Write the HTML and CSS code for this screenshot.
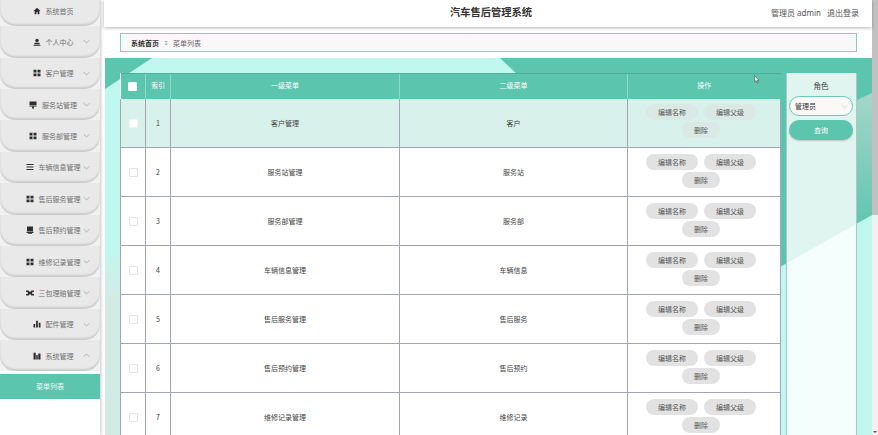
FILE: index.html
```html
<!DOCTYPE html>
<html lang="zh-CN">
<head>
<meta charset="utf-8">
<title>汽车售后管理系统</title>
<link rel="stylesheet" href="styles.css">
</head>
<body>
<svg class="defs" width="0" height="0" aria-hidden="true">
  <symbol id="i-home" viewBox="0 0 16 16"><path d="M8 1.500 1 8h2.200v6.500h3.600V10h2.400v4.500h3.600V8H15z"/></symbol>
  <symbol id="i-user" viewBox="0 0 16 16"><circle cx="8" cy="4.800" r="3.500"/><path d="M3.500 9.500h9l1 2V13h-11v-1.500zM1 14h14v1.500H1z"/></symbol>
  <symbol id="i-grid" viewBox="0 0 16 16"><path d="M1 1.500h6V7H1zM9 1.500h6V7H9zM1 9h6v5.500H1zM9 9h6v5.500H9z"/></symbol>
  <symbol id="i-station" viewBox="0 0 16 16"><path d="M1 1h14v7.500H1zM1 9.500h14V11H1zM6 11.500h4V15H6z"/></symbol>
  <symbol id="i-list" viewBox="0 0 16 16"><path d="M1 2h14v2H1zM1 7h14v2H1zM1 12h14v2H1z"/></symbol>
  <symbol id="i-screen" viewBox="0 0 16 16"><path d="M2 1h12v9.500H2zM1 11.500h14V14H1zM4 14.500h8V16H4z"/></symbol>
  <symbol id="i-cross" viewBox="0 0 16 16"><path d="M0 3h5l3 3 3-3h5v3h-3l-1 2 1 2h3v3h-5l-3-3-3 3H0v-3h3l1-2-1-2H0z"/></symbol>
  <symbol id="i-bars" viewBox="0 0 16 16"><path d="M1 8h3.500v7H1zM6.200 1.500h3.500V15H6.200zM11.500 5.500H15V15h-3.500z"/></symbol>
  <symbol id="i-stats" viewBox="0 0 16 16"><path d="M1 1.500h4.500V15H1zM6.500 6h3v9h-3zM10.500 3H15v12h-4.500z"/></symbol>
  <symbol id="i-down" viewBox="0 0 8 8"><path d="M.8 2.500 4 5.700l3.200-3.200"/></symbol>
  <symbol id="i-up" viewBox="0 0 8 8"><path d="M.8 5.500 4 2.300l3.200 3.200"/></symbol>
</svg>
<div class="app">
  <aside class="sidebar">
    <ul class="nav">
      <li class="nav-item"><span class="nav-main"><svg class="nav-icon"><use href="#i-home"/></svg>系统首页</span></li>
      <li class="nav-item"><span class="nav-main"><svg class="nav-icon"><use href="#i-user"/></svg>个人中心</span><svg class="nav-arrow"><use href="#i-down"/></svg></li>
      <li class="nav-item"><span class="nav-main"><svg class="nav-icon"><use href="#i-grid"/></svg>客户管理</span><svg class="nav-arrow"><use href="#i-down"/></svg></li>
      <li class="nav-item"><span class="nav-main"><svg class="nav-icon"><use href="#i-station"/></svg>服务站管理</span><svg class="nav-arrow"><use href="#i-down"/></svg></li>
      <li class="nav-item"><span class="nav-main"><svg class="nav-icon"><use href="#i-grid"/></svg>服务部管理</span><svg class="nav-arrow"><use href="#i-down"/></svg></li>
      <li class="nav-item"><span class="nav-main"><svg class="nav-icon"><use href="#i-list"/></svg>车辆信息管理</span><svg class="nav-arrow"><use href="#i-down"/></svg></li>
      <li class="nav-item"><span class="nav-main"><svg class="nav-icon"><use href="#i-grid"/></svg>售后服务管理</span><svg class="nav-arrow"><use href="#i-down"/></svg></li>
      <li class="nav-item"><span class="nav-main"><svg class="nav-icon"><use href="#i-screen"/></svg>售后预约管理</span><svg class="nav-arrow"><use href="#i-down"/></svg></li>
      <li class="nav-item"><span class="nav-main"><svg class="nav-icon"><use href="#i-grid"/></svg>维修记录管理</span><svg class="nav-arrow"><use href="#i-down"/></svg></li>
      <li class="nav-item"><span class="nav-main"><svg class="nav-icon"><use href="#i-cross"/></svg>三包理赔管理</span><svg class="nav-arrow"><use href="#i-down"/></svg></li>
      <li class="nav-item"><span class="nav-main"><svg class="nav-icon"><use href="#i-bars"/></svg>配件管理</span><svg class="nav-arrow"><use href="#i-down"/></svg></li>
      <li class="nav-item"><span class="nav-main"><svg class="nav-icon"><use href="#i-stats"/></svg>系统管理</span><svg class="nav-arrow"><use href="#i-up"/></svg></li>
    </ul>
    <div class="nav-active">菜单列表</div>
  </aside>
  <main class="main">
    <header class="topbar">
      <h1 class="title">汽车售后管理系统</h1>
      <div class="account"><span>管理员 admin</span><span>退出登录</span></div>
    </header>
    <nav class="crumbs"><strong>系统首页</strong><span class="crumb-sep">Ξ</span><span>菜单列表</span></nav>
    <section class="panel">
      <div class="panel-tint"></div>
      <div class="panel-body">
        <table class="grid">
          <thead>
            <tr><th class="col-check"><span class="check check-head"></span></th><th class="col-index">索引</th><th class="col-name">一级菜单</th><th class="col-name2">二级菜单</th><th class="col-ops">操作</th></tr>
          </thead>
          <tbody>
            <tr class="row-hover"><td><span class="check"></span></td><td>1</td><td>客户管理</td><td>客户</td><td><div class="ops"><button class="pill">编辑名称</button><button class="pill">编辑父级</button><button class="pill">删除</button></div></td></tr>
            <tr><td><span class="check"></span></td><td>2</td><td>服务站管理</td><td>服务站</td><td><div class="ops"><button class="pill">编辑名称</button><button class="pill">编辑父级</button><button class="pill">删除</button></div></td></tr>
            <tr><td><span class="check"></span></td><td>3</td><td>服务部管理</td><td>服务部</td><td><div class="ops"><button class="pill">编辑名称</button><button class="pill">编辑父级</button><button class="pill">删除</button></div></td></tr>
            <tr><td><span class="check"></span></td><td>4</td><td>车辆信息管理</td><td>车辆信息</td><td><div class="ops"><button class="pill">编辑名称</button><button class="pill">编辑父级</button><button class="pill">删除</button></div></td></tr>
            <tr><td><span class="check"></span></td><td>5</td><td>售后服务管理</td><td>售后服务</td><td><div class="ops"><button class="pill">编辑名称</button><button class="pill">编辑父级</button><button class="pill">删除</button></div></td></tr>
            <tr><td><span class="check"></span></td><td>6</td><td>售后预约管理</td><td>售后预约</td><td><div class="ops"><button class="pill">编辑名称</button><button class="pill">编辑父级</button><button class="pill">删除</button></div></td></tr>
            <tr><td><span class="check"></span></td><td>7</td><td>维修记录管理</td><td>维修记录</td><td><div class="ops"><button class="pill">编辑名称</button><button class="pill">编辑父级</button><button class="pill">删除</button></div></td></tr>
          </tbody>
        </table>
        <form class="filter">
          <label class="filter-label">角色</label>
          <div class="select"><span>管理员</span><svg class="select-arrow"><use href="#i-down"/></svg></div>
          <button type="button" class="query">查询</button>
        </form>
      </div>
      <svg class="cursor" viewBox="0 0 10 14"><path d="M1 1v10l2.500-2.200L5.200 13l1.800-.8L5.300 8.200H8.500z"/></svg>
    </section>
  </main>
  <div class="scrollbar"><div class="scrollbar-thumb"></div><div class="scrollbar-arrow"></div></div>
</div>
</body>
</html>
```
FILE: styles.css
```css
html {
  background: #fff;
}

* { box-sizing: border-box; }

body {
  margin: 0;
  font-family: "Noto Sans CJK SC", "Noto Sans", sans-serif;
  font-size: 7px;
  color: #444;
}

.defs { position: absolute; }

.app {
  display: flex;
  height: 100vh;
  overflow: hidden;
}

/* Sidebar */
.sidebar {
  width: 100px;
  flex: none;
  background: #fff;
  box-shadow: 1px 0 3px rgba(0, 0, 0, .22);
}
.nav {
  list-style: none;
  margin: -5px 0 0;
  padding: 0;
  background: #f1f1f1;
}
.nav-item {
  position: relative;
  height: 31.36px;
  display: flex;
  align-items: center;
  justify-content: center;
  padding-left: 6px;
  background: #e9e9e9;
  border-radius: 0 0 15px 15px;
  box-shadow: inset 0 -2px 2px rgba(0, 0, 0, .13);
  color: #707070;
  white-space: nowrap;
}
.nav-main {
  display: flex;
  align-items: center;
  gap: 5px;
}
.nav-icon {
  width: 8px;
  height: 8px;
  fill: #2f2f2f;
}
.nav-arrow {
  position: absolute;
  right: 10px;
  top: 12px;
  width: 7px;
  height: 7px;
  fill: none;
  stroke: #999;
  stroke-width: .8;
}
.nav-active {
  margin-top: 3px;
  height: 25px;
  line-height: 25px;
  text-align: center;
  background: #5bc5ae;
  color: #f4fbf9;
}

/* Main column */
.main {
  flex: 1;
  min-width: 0;
  margin-left: 4px;
  display: flex;
  flex-direction: column;
}
.topbar {
  height: 27px;
  flex: none;
  display: flex;
  align-items: center;
  justify-content: flex-end;
  position: relative;
  padding: 0 13px 2px 0;
  background: #fff;
  box-shadow: 0 1px 3px rgba(0, 0, 0, .3);
}
.title {
  position: absolute;
  left: 346px;
  top: 4px;
  margin: 0;
  font-size: 10.250px;
  line-height: 16px;
  font-weight: 700;
  color: #333;
}
.account {
  display: flex;
  gap: 6px;
  font-family: "Noto Sans", "Noto Sans CJK SC", sans-serif;
  font-size: 8px;
  color: #555;
}
.crumbs {
  height: 19px;
  flex: none;
  margin: 6px 15px 6px 16px;
  padding-left: 10px;
  display: flex;
  align-items: center;
  gap: 4px;
  background: #faf7f8;
  border: 1px solid #83cfbd;
  color: #666;
}
.crumbs strong { color: #333; font-weight: 700; }
.crumb-sep {
  width: 6px;
  text-align: center;
  font-size: 5px;
  font-family: "DejaVu Sans", sans-serif;
}

/* Panel */
.panel {
  position: relative;
  flex: 1;
  margin-left: 1px;
  padding: 15px 15px 0;
  background:
    linear-gradient(transparent 190px, #d2ece5 240px) left top / 15px 100% no-repeat,
    #c0f7ee;
  overflow: hidden;
}
.panel::before,
.panel::after {
  content: "";
  position: absolute;
  inset: 0;
  background: #5bc5ae;
}
.panel::before { clip-path: polygon(395px 0, 767px 0, 767px 157px, 675px 209px, 500px 100px); }
.panel::after { clip-path: polygon(0 0, 47px 0, 0 31px); }
.panel-tint {
  position: absolute;
  z-index: 1;
  left: 752px;
  top: 35px;
  width: 15px;
  height: 129px;
  background: linear-gradient(#a5d6ca, #62c6b1);
  clip-path: polygon(0 7px, 100% 0, 100% 122px, 0 100%);
}
.panel-body {
  position: relative;
  z-index: 2;
  height: 100%;
  display: flex;
  align-items: stretch;
  gap: 5px;
}

/* Table */
.grid {
  width: 660px;
  flex: none;
  table-layout: fixed;
  border-collapse: collapse;
  background: #fff;
  align-self: flex-start;
}
.grid th {
  height: 25px;
  padding: 0 0 2px;
  background: #5bc5ae;
  color: #fff;
  font-weight: 400;
  border-left: 1px solid #8cdbc9;
  border-top: 1px solid #4fae9a;
}
.grid th:first-child { border-left: 0; }
.col-check, .col-index { width: 25px; }
.col-name { width: 229px; }
.col-name2 { width: 228px; }
.col-ops { width: 153px; }
.grid td {
  height: 49px;
  padding: 0;
  text-align: center;
  color: #444;
  border: 1px solid #a2a6b4;
  border-top: 0;
}
.row-hover td { background: #d8f1ea; }
.check {
  display: inline-block;
  width: 9px;
  height: 9px;
  vertical-align: middle;
  background: #fff;
  border: 1px solid #e4e4e4;
  border-radius: 1px;
}
.row-hover .check { border-color: #eef6f4; }
.check-head { border-color: #fff; }
.ops {
  display: flex;
  flex-wrap: wrap;
  justify-content: center;
  gap: 2px 6px;
  padding: 0 6px 3px 0;
}
.pill {
  height: 16px;
  padding: 0 12px;
  border: 0;
  border-radius: 8px;
  background: #e2e2e2;
  color: #555;
  font: inherit;
  line-height: 16px;
}
.row-hover .pill { background: #dbe9e5; }

/* Filter column */
.filter {
  flex: 1;
  min-width: 0;
  padding: 3px 3px 0 2px;
  background: rgba(255, 255, 255, .82);
  border: 1px solid #a9c9c2;
  border-width: 0 1px;
  display: flex;
  flex-direction: column;
}
.filter-label {
  height: 20px;
  line-height: 20px;
  text-align: center;
  font-size: 7.500px;
  color: #444;
}
.select {
  height: 20px;
  padding: 0 4px 0 5px;
  display: flex;
  align-items: center;
  justify-content: space-between;
  background: #fbf8f8;
  border: 1px solid #6ec9b5;
  border-radius: 10px;
  color: #333;
}
.select-arrow {
  width: 7px;
  height: 7px;
  fill: none;
  stroke: #ccc;
  stroke-width: .8;
}
.query {
  height: 20px;
  flex: none;
  margin-top: 4px;
  border: 0;
  border-radius: 10px;
  background: #5bc5ae;
  color: #fff;
  font: inherit;
  box-shadow: 0 1px 2px rgba(0, 0, 0, .2);
}

.cursor {
  position: absolute;
  z-index: 3;
  left: 649px;
  top: 17px;
  width: 6px;
  height: 9px;
  fill: #fff;
  stroke: #444;
  stroke-width: 1;
}

/* Page scrollbar as photographed */
.scrollbar {
  width: 6px;
  flex: none;
  display: flex;
  flex-direction: column;
  justify-content: space-between;
  background: #f1f1f1;
}
.scrollbar-thumb {
  height: 215px;
  background: #c1c1c1;
}
.scrollbar-arrow {
  align-self: center;
  margin-bottom: 2px;
  border: 2px solid transparent;
  border-top-color: #555;
  border-bottom-width: 0;
}
```
